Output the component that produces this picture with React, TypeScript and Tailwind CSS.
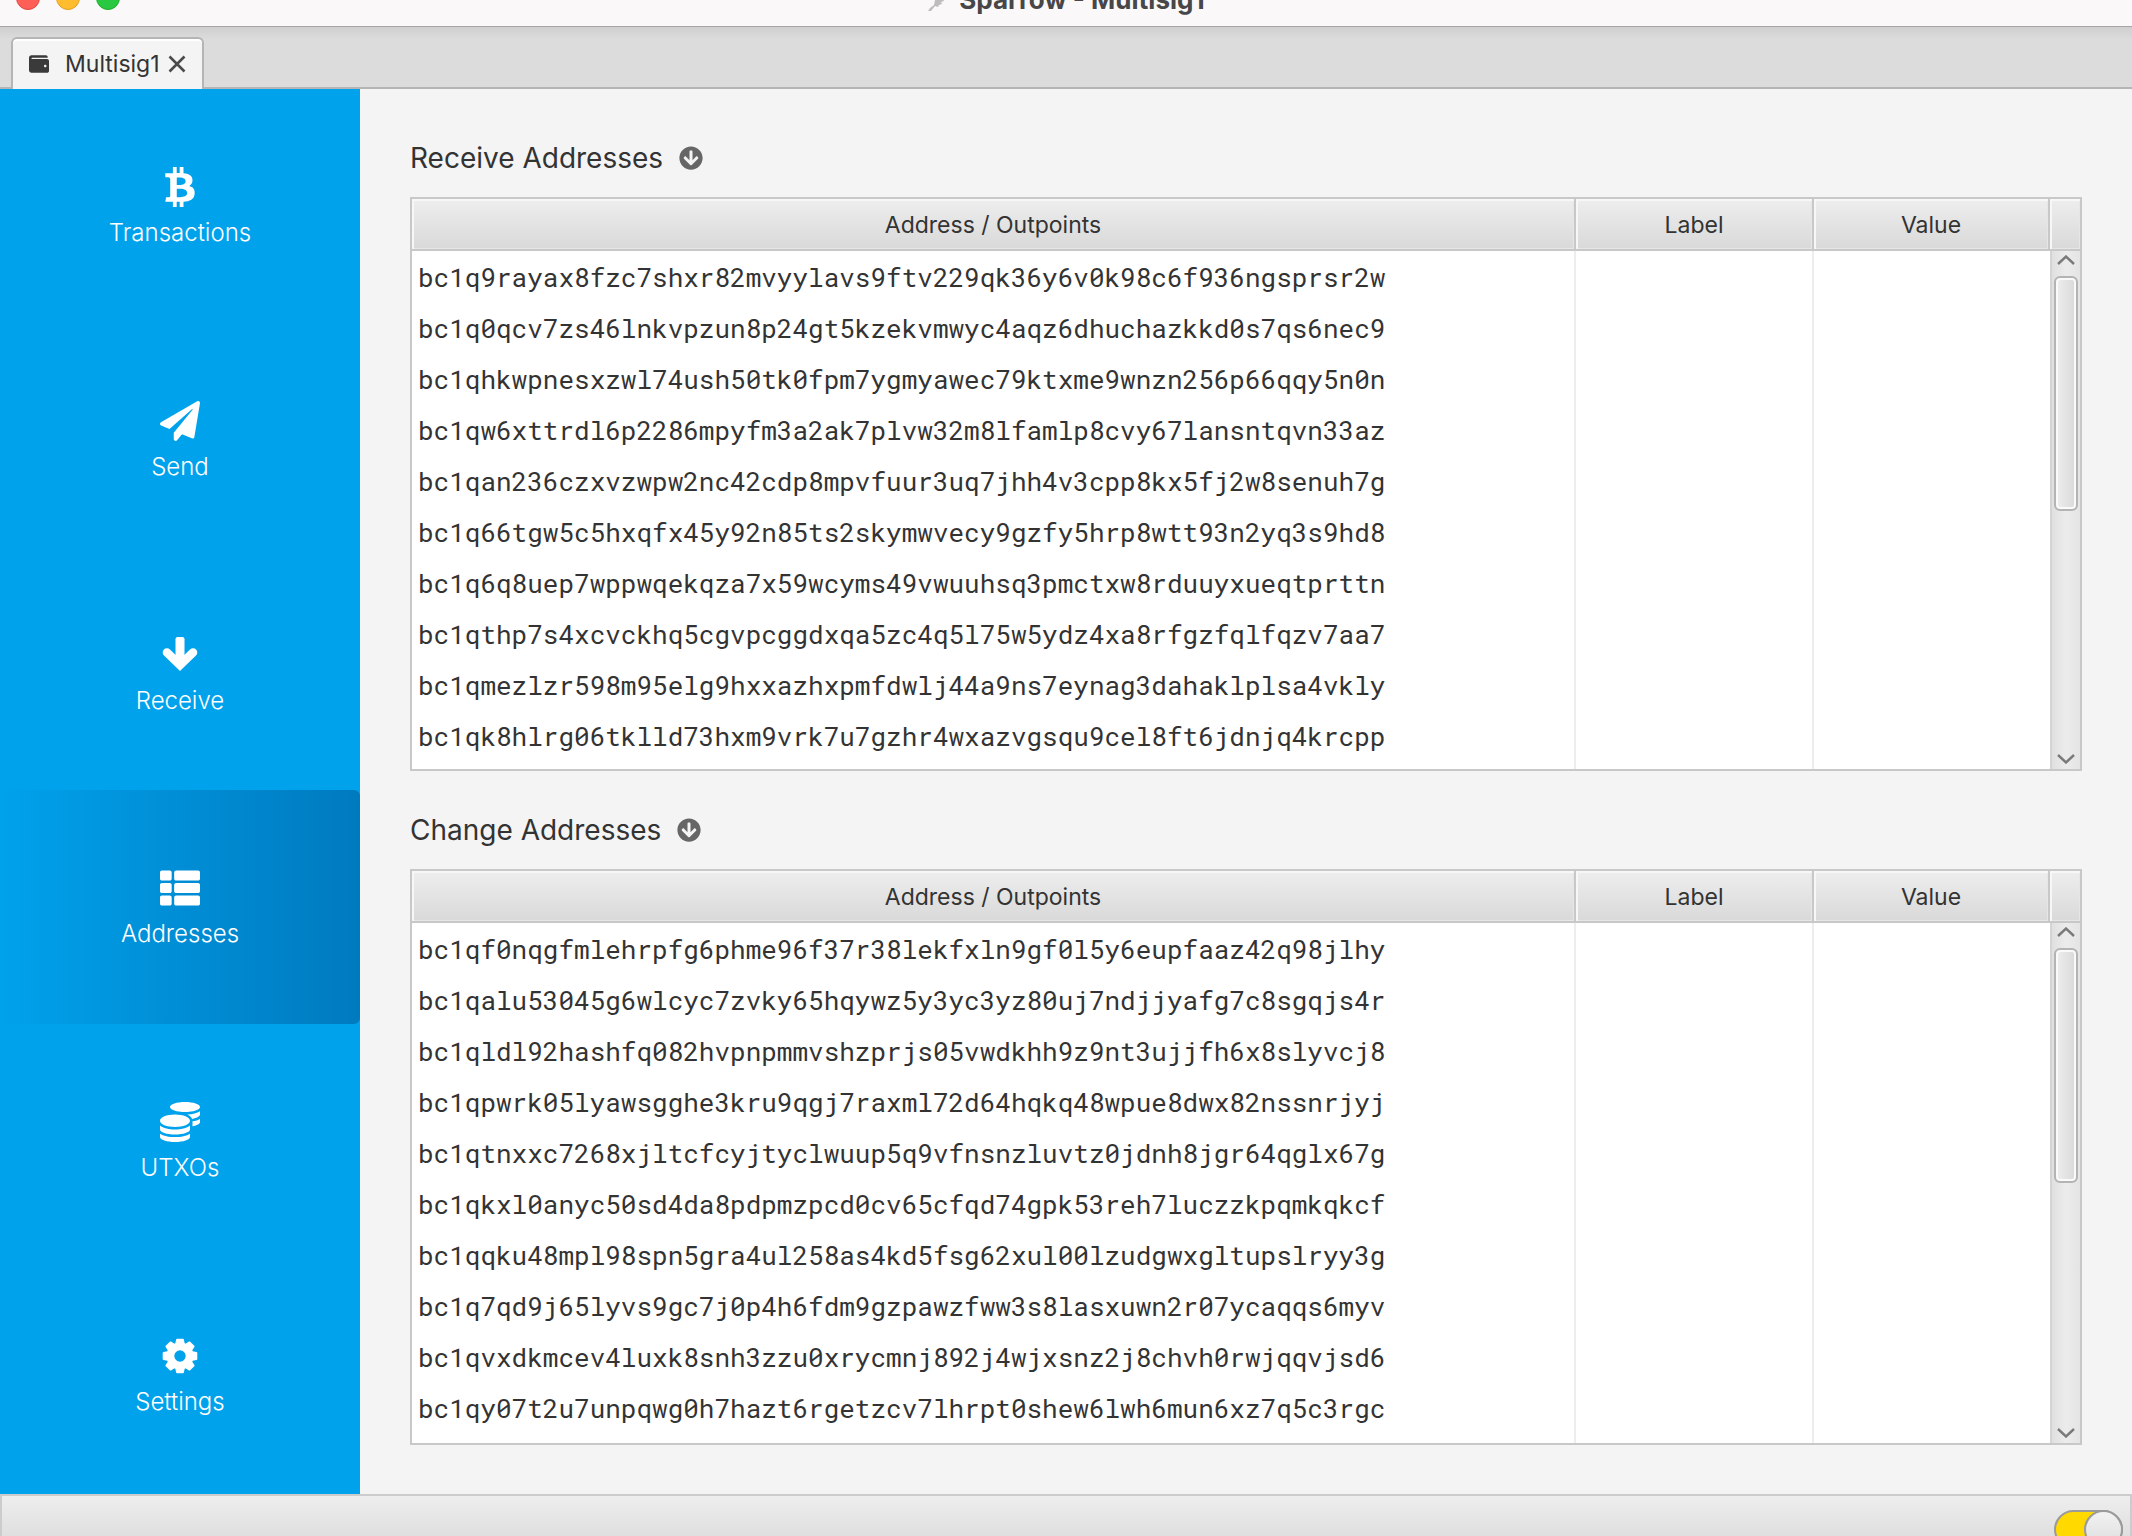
import type { ComponentType } from 'react'
import { FaArrowCircleDown, FaBtc, FaCoins, FaPaperPlane, FaThList, FaWallet } from 'react-icons/fa'

interface IconProps {
    className?: string;
}

interface NavItem {
    label: string;
    icon: ComponentType<IconProps>;
    active?: boolean;
}

function ArrowDownIcon({ className }: IconProps) {
    return (
        <svg className={className} viewBox="0 0 40 40" fill="none">
            <rect x="15.500" y="2" width="9" height="26" rx="2.200" fill="currentColor" />
            <path d="M7 17.500 20 30 33 17.500" stroke="currentColor" strokeWidth="8.600" strokeLinecap="round" />
        </svg>
    )
}

function GearIcon({ className }: IconProps) {
    return (
        <svg className={className} viewBox="-20 -20 40 40" fill="none">
            <circle r="9.600" stroke="currentColor" strokeWidth="7.800" />
            {[0, 45, 90, 135, 180, 225, 270, 315].map((angle) => (
                <path
                    key={angle}
                    d="M-4 -11 -2.900 -16.300H2.900L4 -11z"
                    transform={`rotate(${angle})`}
                    fill="currentColor"
                    stroke="currentColor"
                    strokeWidth="2"
                    strokeLinejoin="round"
                />
            ))}
        </svg>
    )
}

const navItems: NavItem[] = [
    { label: 'Transactions', icon: FaBtc },
    { label: 'Send', icon: FaPaperPlane },
    { label: 'Receive', icon: ArrowDownIcon },
    { label: 'Addresses', icon: FaThList, active: true },
    { label: 'UTXOs', icon: FaCoins },
    { label: 'Settings', icon: GearIcon },
]

const receiveAddresses = [
    'bc1q9rayax8fzc7shxr82mvyylavs9ftv229qk36y6v0k98c6f936ngsprsr2w',
    'bc1q0qcv7zs46lnkvpzun8p24gt5kzekvmwyc4aqz6dhuchazkkd0s7qs6nec9',
    'bc1qhkwpnesxzwl74ush50tk0fpm7ygmyawec79ktxme9wnzn256p66qqy5n0n',
    'bc1qw6xttrdl6p2286mpyfm3a2ak7plvw32m8lfamlp8cvy67lansntqvn33az',
    'bc1qan236czxvzwpw2nc42cdp8mpvfuur3uq7jhh4v3cpp8kx5fj2w8senuh7g',
    'bc1q66tgw5c5hxqfx45y92n85ts2skymwvecy9gzfy5hrp8wtt93n2yq3s9hd8',
    'bc1q6q8uep7wppwqekqza7x59wcyms49vwuuhsq3pmctxw8rduuyxueqtprttn',
    'bc1qthp7s4xcvckhq5cgvpcggdxqa5zc4q5l75w5ydz4xa8rfgzfqlfqzv7aa7',
    'bc1qmezlzr598m95elg9hxxazhxpmfdwlj44a9ns7eynag3dahaklplsa4vkly',
    'bc1qk8hlrg06tklld73hxm9vrk7u7gzhr4wxazvgsqu9cel8ft6jdnjq4krcpp',
]

const changeAddresses = [
    'bc1qf0nqgfmlehrpfg6phme96f37r38lekfxln9gf0l5y6eupfaaz42q98jlhy',
    'bc1qalu53045g6wlcyc7zvky65hqywz5y3yc3yz80uj7ndjjyafg7c8sgqjs4r',
    'bc1qldl92hashfq082hvpnpmmvshzprjs05vwdkhh9z9nt3ujjfh6x8slyvcj8',
    'bc1qpwrk05lyawsgghe3kru9qgj7raxml72d64hqkq48wpue8dwx82nssnrjyj',
    'bc1qtnxxc7268xjltcfcyjtyclwuup5q9vfnsnzluvtz0jdnh8jgr64qglx67g',
    'bc1qkxl0anyc50sd4da8pdpmzpcd0cv65cfqd74gpk53reh7luczzkpqmkqkcf',
    'bc1qqku48mpl98spn5gra4ul258as4kd5fsg62xul00lzudgwxgltupslryy3g',
    'bc1q7qd9j65lyvs9gc7j0p4h6fdm9gzpawzfww3s8lasxuwn2r07ycaqqs6myv',
    'bc1qvxdkmcev4luxk8snh3zzu0xrycmnj892j4wjxsnz2j8chvh0rwjqqvjsd6',
    'bc1qy07t2u7unpqwg0h7hazt6rgetzcv7lhrpt0shew6lwh6mun6xz7q5c3rgc',
]

function TitleBar() {
    return (
        <header className="relative flex h-[27px] shrink-0 items-end justify-center overflow-hidden border-b border-[#a6a6a6] bg-[#faf8f9]">
            <div className="absolute bottom-4 left-4 flex gap-4">
                <button aria-label="Close window" className="size-6 rounded-full border border-[#e2463f] bg-[#fe5f57]" />
                <button aria-label="Minimize window" className="size-6 rounded-full border border-[#e0a123] bg-[#febc2e]" />
                <button aria-label="Zoom window" className="size-6 rounded-full border border-[#1dad2b] bg-[#28c840]" />
            </div>
            <div className="flex items-end gap-3 pb-[14px]">
                <svg className="h-6 w-5 text-[#bdbdbd]" viewBox="0 0 20 24" fill="currentColor">
                    <path d="M17 1c2 4 1 8-1 10l1 2-3 1 1 2-3 1-1 2-3-1-4 5H1l2-3 4-3 1-5 3-6z" />
                </svg>
                <h1 className="font-[Inter,sans-serif] text-[26px] leading-6 font-bold text-[#474648]">Sparrow - Multisig1</h1>
            </div>
        </header>
    )
}

function TabBar() {
    return (
        <div className="flex h-[62px] shrink-0 items-end bg-linear-to-b from-[#cfcfcf] via-[#dcdcdc] via-20% to-[#dcdcdc] pl-[11px] shadow-[inset_0_-2px_0_#b5b5b5]">
            <div className="flex h-[52px] items-center rounded-t-md border-2 border-b-0 border-[#b5b5b5] bg-[#f4f4f4] pr-4 pl-4 shadow-[inset_0_2px_0_#ffffff]">
                <FaWallet className="mr-4 size-5 text-[#3a3a3a]" />
                <span className="mr-2 text-[23px] leading-8">Multisig1</span>
                <button aria-label="Close tab">
                    <svg className="size-[18px] text-[#4a4a4a]" viewBox="0 0 18 18" fill="none" stroke="currentColor" strokeWidth="2.6"><path d="M1.500 1.500l15 15M16.500 1.500l-15 15" /></svg>
                </button>
            </div>
        </div>
    )
}

function Sidebar() {
    return (
        <nav className="flex w-[360px] shrink-0 flex-col bg-[#00a2ec] pb-[2px]">
            {navItems.map(({ label, icon: Icon, active }) => (
                <button
                    key={label}
                    aria-current={active ? 'page' : undefined}
                    className={`flex flex-1 flex-col items-center justify-center gap-[14px] text-white ${active ? 'rounded-r-md bg-linear-to-r from-[#00a2ec] to-[#007abf]' : ''}`}
                >
                    <Icon className="size-10" />
                    <span className="text-2xl leading-6 font-light">{label}</span>
                </button>
            ))}
        </nav>
    )
}

const headCell = 'h-[52px] border-b-2 border-[#c8c8c8] bg-linear-to-b from-[#eeeeee] to-[#d9d9d9] p-0 pt-[2px] text-[23px] font-normal shadow-[inset_2px_2px_0_#f7f7f7,inset_-1px_-1px_0_#e6e6e6]'

function ScrollBar() {
    return (
        <div className="flex min-h-0 flex-1 flex-col items-center border-l-2 border-[#d4d4d4] bg-linear-to-r from-[#e0e0e0] via-[#ececec] to-[#e4e4e4]">
            <button aria-label="Scroll up" className="flex h-[25px] items-start pt-1">
                <svg className="h-[10px] w-[18px] text-[#7a7a7a]" viewBox="0 0 18 10" fill="none" stroke="currentColor" strokeWidth="2.4"><path d="M1 9l8-7.500L17 9" /></svg>
            </button>
            <div className="h-[235px] w-6 rounded-md border-2 border-[#b4b4b4] bg-linear-to-r from-[#eeeeee] to-[#d9d9d9] shadow-[inset_0_0_0_2px_#fafafa]" />
            <button aria-label="Scroll down" className="mt-auto flex h-5 items-center">
                <svg className="h-[10px] w-[18px] text-[#7a7a7a]" viewBox="0 0 18 10" fill="none" stroke="currentColor" strokeWidth="2.4"><path d="M1 1l8 7.500L17 1" /></svg>
            </button>
        </div>
    )
}

interface AddressSectionProps {
    title: string;
    addresses: string[];
}

function AddressSection({ title, addresses }: AddressSectionProps) {
    return (
        <section className="flex min-h-0 flex-col last:flex-1">
            <div className="flex h-[98px] shrink-0 items-center gap-4 pt-5">
                <h2 className="text-[28px] leading-10">{title}</h2>
                <button aria-label={`Expand ${title}`}>
                    <FaArrowCircleDown className="size-6 text-[#666666]" />
                </button>
            </div>
            <div className="flex min-h-0 flex-1 overflow-hidden border-2 border-[#c8c8c8] bg-white">
                <table className="min-w-0 flex-1 table-fixed border-separate border-spacing-0">
                    <colgroup>
                        <col />
                        <col className="w-[238px]" />
                        <col className="w-[236px]" />
                    </colgroup>
                    <thead>
                        <tr>
                            <th className={`${headCell} border-r-2`}>Address / Outpoints</th>
                            <th className={`${headCell} border-r-2`}>Label</th>
                            <th className={`${headCell} border-r-2`}>Value</th>
                        </tr>
                    </thead>
                    <tbody>
                        {addresses.map((address) => (
                            <tr key={address} className="h-[51px]">
                                <td className="border-r-2 border-[#ededed] p-0 pl-[6px] font-['Roboto_Mono','Liberation_Mono',monospace] text-[26px] leading-8">{address}</td>
                                <td className="border-r-2 border-[#ededed] p-0" />
                                <td className="p-0" />
                            </tr>
                        ))}
                        <tr>
                            <td className="border-r-2 border-[#ededed] p-0 pt-2" />
                            <td className="border-r-2 border-[#ededed] p-0" />
                            <td className="p-0" />
                        </tr>
                    </tbody>
                </table>
                <div className="flex w-[30px] shrink-0 flex-col">
                    <div className={`${headCell} shrink-0`} />
                    <ScrollBar />
                </div>
            </div>
        </section>
    )
}

export default function App() {
    return (
        <div className="flex h-screen flex-col overflow-hidden bg-[#f4f4f4] font-[Inter,sans-serif] text-[#333333]">
            <TitleBar />
            <TabBar />
            <div className="flex min-h-0 flex-1">
                <Sidebar />
                <main className="flex min-w-0 flex-1 flex-col pt-[10px] pr-[50px] pb-[49px] pl-[50px]">
                    <AddressSection title="Receive Addresses" addresses={receiveAddresses} />
                    <AddressSection title="Change Addresses" addresses={changeAddresses} />
                </main>
            </div>
            <footer className="flex h-[42px] shrink-0 items-start justify-end overflow-hidden border-x-2 border-t-2 border-[#cccccc] bg-linear-to-b from-[#eeeeee] to-[#dfdfdf] pt-[14px] pr-[7px]">
                <input
                    type="checkbox"
                    role="switch"
                    aria-label="Server connection"
                    defaultChecked
                    className="relative h-[39px] w-[69px] shrink-0 appearance-none rounded-full border-2 border-[#9b9b9b] bg-[#ffd900] before:absolute before:-top-[2px] before:-right-[2px] before:size-[39px] before:rounded-full before:border-2 before:border-[#9b9b9b] before:bg-linear-to-b before:from-[#f2f2f2] before:to-[#dddddd]"
                />
            </footer>
        </div>
    )
}
